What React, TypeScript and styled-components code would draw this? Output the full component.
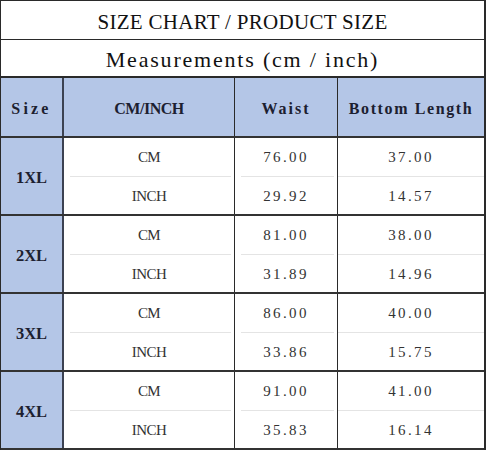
import React from "react";
import styled, { createGlobalStyle } from "styled-components";

const Global = createGlobalStyle`
  html, body { margin: 0; padding: 0; background: #ffffff; }
  body { font-family: "Liberation Serif", "Times New Roman", serif; }
`;

const COLS = "63px 171px 103px 146px";
const BLUE = "#b4c6e7";
const LINE = "#2a2a2a";

const Table = styled.div`
  width: 486px;
  box-sizing: border-box;
  border-top: 1px solid ${LINE};
  border-left: 1px solid ${LINE};
  border-right: 2px solid ${LINE};
  color: #1a1a1a;
`;

const TitleRow = styled.div<{ $h: number; $b: number; $size: number; $ls: number; $pt: number }>`
  height: ${(p) => p.$h}px;
  box-sizing: border-box;
  border-bottom: ${(p) => p.$b}px solid ${LINE};
  display: flex;
  align-items: center;
  justify-content: center;
  padding-top: ${(p) => p.$pt}px;
  font-size: ${(p) => p.$size}px;
  letter-spacing: ${(p) => p.$ls}px;
  color: #111;
`;

const Row = styled.div<{ $h: number }>`
  display: grid;
  grid-template-columns: ${COLS};
  height: ${(p) => p.$h}px;
  box-sizing: border-box;
  border-bottom: 2px solid #333;
`;

const HeadCell = styled.div<{ $ls: number; $edge?: boolean }>`
  background: ${BLUE};
  display: flex;
  align-items: center;
  justify-content: center;
  box-sizing: border-box;
  border-right: ${(p) => (p.$edge ? "none" : `1px solid ${LINE}`)};
  font-weight: bold;
  font-size: 16px;
  letter-spacing: ${(p) => p.$ls}px;
  color: #1c2030;
  padding-top: 4px;
`;

const SizeHead = styled(HeadCell)`
  border-right: 2px solid #3c4252;
`;

const SizeCell = styled.div`
  background: ${BLUE};
  display: flex;
  align-items: center;
  justify-content: center;
  box-sizing: border-box;
  border-right: 2px solid #3c4252;
  font-weight: bold;
  font-size: 16.5px;
  color: #1c2030;
  padding-top: 4px;
`;

const ValueCell = styled.div<{ $edge?: boolean }>`
  display: flex;
  flex-direction: column;
  box-sizing: border-box;
  border-right: ${(p) => (p.$edge ? "none" : `1px solid ${LINE}`)};
`;

const Val = styled.div<{ $ls: number }>`
  flex: 1;
  display: flex;
  align-items: center;
  justify-content: center;
  font-size: 15px;
  letter-spacing: ${(p) => p.$ls}px;
  color: #333;
  padding-top: 2px;
`;

const Divider = styled.div<{ $edge?: boolean }>`
  height: 1px;
  margin: ${(p) => (p.$edge ? "0" : "0 3px 0 6px")};
  background: #e4e4e4;
`;

type Group = { size: string; waist: [string, string]; bottom: [string, string] };

const groups: Group[] = [
  { size: "1XL", waist: ["76.00", "29.92"], bottom: ["37.00", "14.57"] },
  { size: "2XL", waist: ["81.00", "31.89"], bottom: ["38.00", "14.96"] },
  { size: "3XL", waist: ["86.00", "33.86"], bottom: ["40.00", "15.75"] },
  { size: "4XL", waist: ["91.00", "35.83"], bottom: ["41.00", "16.14"] },
];

const Pair: React.FC<{ a: string; b: string; ls: number; edge?: boolean }> = ({ a, b, ls, edge }) => (
  <ValueCell $edge={edge}>
    <Val $ls={ls}>{a}</Val>
    <Divider $edge={edge} />
    <Val $ls={ls}>{b}</Val>
  </ValueCell>
);

export default function App() {
  return (
    <>
      <Global />
      <Table>
        <TitleRow $h={39} $b={1} $size={21} $ls={0.3} $pt={5}>
          SIZE CHART / PRODUCT SIZE
        </TitleRow>
        <TitleRow $h={38} $b={2} $size={22} $ls={1.8} $pt={4}>
          Measurements (cm / inch)
        </TitleRow>
        <Row $h={60}>
          <SizeHead $ls={3.2}>Size</SizeHead>
          <HeadCell $ls={-0.5}>CM/INCH</HeadCell>
          <HeadCell $ls={2}>Waist</HeadCell>
          <HeadCell $ls={1.6} $edge>
            Bottom Length
          </HeadCell>
        </Row>
        {groups.map((g) => (
          <Row $h={78} key={g.size}>
            <SizeCell>{g.size}</SizeCell>
            <Pair a="CM" b="INCH" ls={-0.6} />
            <Pair a={g.waist[0]} b={g.waist[1]} ls={2.4} />
            <Pair a={g.bottom[0]} b={g.bottom[1]} ls={2.4} edge />
          </Row>
        ))}
      </Table>
    </>
  );
}
